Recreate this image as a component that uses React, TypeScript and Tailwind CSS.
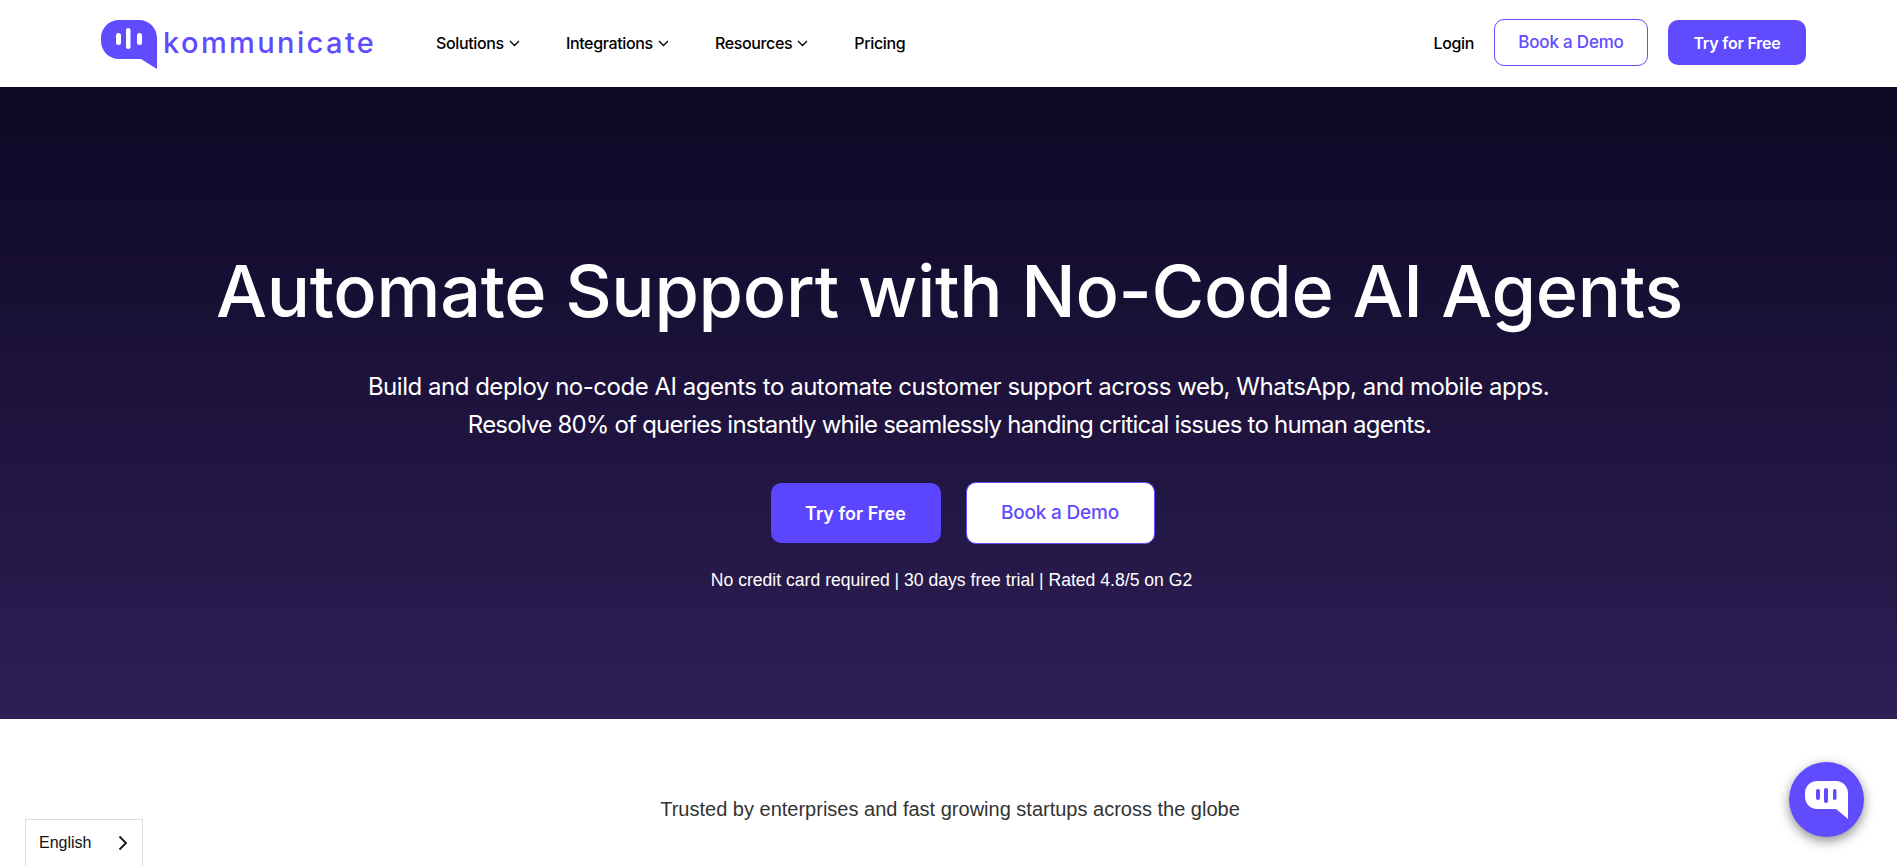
import { type ReactElement } from "react";

const navItems: { label: string; hasMenu: boolean }[] = [
  { label: "Solutions", hasMenu: true },
  { label: "Integrations", hasMenu: true },
  { label: "Resources", hasMenu: true },
  { label: "Pricing", hasMenu: false },
];

const Chevron = (): ReactElement => (
  <svg width="11" height="7" viewBox="0 0 11 7" fill="none" className="ml-[5px] mt-[1px]">
    <path d="M1 1l4.500 4.500L10 1" stroke="#000" strokeWidth="1.300" />
  </svg>
);

const LogoMark = (): ReactElement => (
  <svg width="56" height="49" viewBox="0 0 56 49" fill="none">
    <path
      d="M18 0h20c10 0 18 8 18 18v31L40 39H18C8 39 0 31 0 21v-3C0 8 8 0 18 0z"
      fill="#604BFF"
    />
    <rect x="15" y="13" width="5" height="12" rx="2.500" fill="white" />
    <rect x="25" y="8" width="4.500" height="21" rx="2.250" fill="white" />
    <rect x="36" y="13" width="5" height="12" rx="2.500" fill="white" />
  </svg>
);

const ChatMark = (): ReactElement => (
  <svg width="43" height="38" viewBox="0 0 43 38" fill="none">
    <path
      d="M12 0h19c6.500 0 12 5.500 12 12v26L31 28H12C5.500 28 0 22.500 0 16v-4C0 5.500 5.500 0 12 0z"
      fill="white"
    />
    <rect x="11" y="8" width="4" height="11" rx="2" fill="#604BFF" />
    <rect x="19" y="7" width="4" height="15" rx="2" fill="#604BFF" />
    <rect x="28" y="8" width="3.500" height="11" rx="1.750" fill="#604BFF" />
  </svg>
);

const App = (): ReactElement => (
  <div className="relative h-[866px] overflow-hidden bg-white font-['Inter',sans-serif]">
    <header className="flex h-[87px] items-center pb-[2px] pl-[101px] pr-[91px]">
      <div className="flex w-[335px] items-start">
        <div className="mt-[3px]">
          <LogoMark />
        </div>
        <span className="ml-[6px] mt-[8px] text-[29px] leading-[36px] font-medium tracking-[2.4px] text-[#604BFF]">
          kommunicate
        </span>
      </div>

      <nav className="flex items-center gap-[46px]">
        {navItems.map((item) => (
          <a
            key={item.label}
            className="flex items-center text-[16px] font-[550] tracking-[-0.35px] text-black"
          >
            {item.label}
            {item.hasMenu && <Chevron />}
          </a>
        ))}
      </nav>

      <div className="ml-auto flex items-center">
        <a className="text-[16px] font-[550] tracking-[-0.35px] text-black">Login</a>
        <a className="ml-[20px] flex h-[47px] w-[154px] items-center justify-center rounded-[10px] border border-[#604BFF] text-[17px] font-medium tracking-[-0.2px] text-[#604BFF]">
          Book a Demo
        </a>
        <a className="ml-[20px] flex h-[45px] w-[138px] items-center justify-center rounded-[10px] bg-[#604BFF] text-[16px] font-semibold tracking-[-0.2px] text-white">
          Try for Free
        </a>
      </div>
    </header>

    <section className="flex h-[632px] flex-col items-center bg-gradient-to-b from-[#0e0825] to-[#2e1f56] pt-[161px] text-white">
      <h1 className="ml-[2px] text-[72px] leading-[86px] font-medium tracking-[-0.3px]">
        Automate Support with No-Code AI Agents
      </h1>
      <p className="ml-[2px] mt-[34px] text-center text-[24px] leading-[38px]">
        <span className="ml-[18px] block tracking-[-0.48px]">
          Build and deploy no-code AI agents to automate customer support across web, WhatsApp, and mobile apps.
        </span>
        <span className="block tracking-[-0.79px]">
          Resolve 80% of queries instantly while seamlessly handing critical issues to human agents.
        </span>
      </p>
      <div className="ml-[28px] mt-[38px] flex items-center gap-[25px]">
        <a className="flex h-[60px] w-[170px] items-center justify-center rounded-[10px] bg-[#5B45FF] text-[18px] font-semibold text-white">
          Try for Free
        </a>
        <a className="flex h-[62px] w-[189px] items-center justify-center rounded-[10px] border border-[#604BFF] bg-white text-[19px] font-medium tracking-[-0.2px] text-[#604BFF]">
          Book a Demo
        </a>
      </div>
      <p className="ml-[6px] mt-[22px] font-['Liberation_Sans',sans-serif] text-[17.6px] leading-[28px]">
        No credit card required | 30 days free trial | Rated 4.8/5 on G2
      </p>
    </section>

    <section className="pl-[3px] pt-[76px] text-center">
      <p className="font-['Liberation_Sans',sans-serif] text-[20px] leading-[28px] text-[#333]">
        Trusted by enterprises and fast growing startups across the globe
      </p>
    </section>

    <div className="absolute bottom-0 left-[25px] flex h-[47px] w-[118px] items-start justify-between border-[1px] border-b-0 border-[#ddd] bg-white pl-[13px] pr-[14px] pt-[12px] font-['Liberation_Sans',sans-serif] text-[16px] leading-[22px] text-[#111]">
      English
      <svg width="10" height="16" viewBox="0 0 10 16" fill="none" className="mt-[3px]">
        <path d="M1.500 1.500L8 8l-6.500 6.500" stroke="#111" strokeWidth="1.800" />
      </svg>
    </div>

    <button
      type="button"
      className="absolute left-[1789px] top-[762px] flex h-[75px] w-[75px] items-center justify-center rounded-full bg-[#604BFF] shadow-[0_4px_12px_rgba(0,0,0,0.45)]"
    >
      <ChatMark />
    </button>
  </div>
);

export default App;
